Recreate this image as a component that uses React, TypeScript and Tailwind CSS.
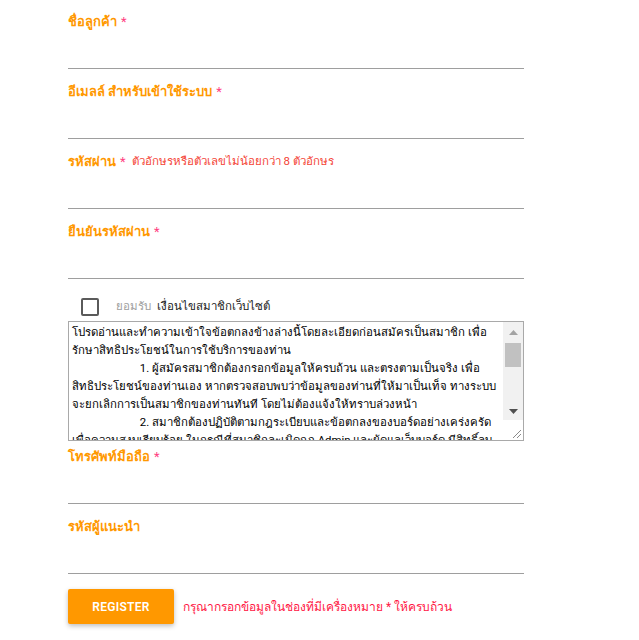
import { useState } from "react";

const terms = `โปรดอ่านและทำความเข้าใจข้อตกลงข้างล่างนี้โดยละเอียดก่อนสมัครเป็นสมาชิก เพื่อรักษาสิทธิประโยชน์ในการใช้บริการของท่าน
                        1. ผู้สมัครสมาชิกต้องกรอกข้อมูลให้ครบถ้วน และตรงตามเป็นจริง เพื่อสิทธิประโยชน์ของท่านเอง หากตรวจสอบพบว่าข้อมูลของท่านที่ให้มาเป็นเท็จ ทางระบบจะยกเลิกการเป็นสมาชิกของท่านทันที โดยไม่ต้องแจ้งให้ทราบล่วงหน้า
                        2. สมาชิกต้องปฏิบัติตามกฎระเบียบและข้อตกลงของบอร์ดอย่างเคร่งครัด เพื่อความสงบเรียบร้อย ในกรณีที่สมาชิกละเมิดกฎ Admin และผู้ดูแลเว็บบอร์ด มีสิทธิ์ลบหรือระงับการใช้งานของสมาชิกได้ทันที
                        3. สมาชิกต้องรับผิดชอบต่อข้อความที่ตนเองโพสต์`;

function Field({
  label,
  hint,
  star = true,
  type = "text",
}: {
  label: string;
  hint?: string;
  star?: boolean;
  type?: string;
}) {
  return (
    <label className="block h-[70px]">
      <div className="flex h-[44px] items-center text-[13px] font-bold text-[#ff9800]">
        <span>{label}</span>
        {star ? <span className="ml-1 font-normal text-[#ff4081]">*</span> : null}
        {hint ? (
          <span className="ml-[6px] text-[11.5px] font-normal text-[#f44336]">{hint}</span>
        ) : null}
      </div>
      <input
        type={type}
        className="block h-[25px] w-full border-b border-[#9e9e9e] bg-transparent outline-none"
      />
    </label>
  );
}

// textarea with a drawn scrollbar, as the headless browser hides native ones
function TermsBox() {
  return (
    <div className="mt-[4px] flex h-[120px] w-[456px] border border-[#a9a9a9] bg-white">
      <textarea
        readOnly
        defaultValue={terms}
        className="h-full flex-1 resize-none overflow-y-auto px-[3px] py-[1px] text-[11.4px] leading-[18px] text-black outline-none [scrollbar-width:none]"
      />
      <div className="flex w-[20px] flex-col">
        <div className="flex flex-1 flex-col bg-[#f1f1f1]">
          <div className="flex h-[21px] items-center justify-center">
            <svg width="9" height="5" viewBox="0 0 9 5">
              <path d="M0 5 L4.5 0 L9 5 Z" fill="#a3a3a3" />
            </svg>
          </div>
          <div className="mx-[2px] h-[24px] bg-[#c1c1c1]" />
          <div className="flex-1" />
          <div className="flex h-[17px] items-center justify-center">
            <svg width="9" height="5" viewBox="0 0 9 5">
              <path d="M0 0 L9 0 L4.5 5 Z" fill="#505050" />
            </svg>
          </div>
        </div>
        <div className="flex h-[20px] items-end justify-end bg-white p-[2px]">
          <svg width="9" height="9" viewBox="0 0 9 9">
            <path d="M9 1 L1 9 M9 5 L5 9" stroke="#8a8a8a" strokeWidth="1" />
          </svg>
        </div>
      </div>
    </div>
  );
}

export default function App() {
  const [agree, setAgree] = useState(false);

  return (
    <div className="min-h-[640px] bg-white font-['Roboto','Noto_Sans',sans-serif] text-[13px] text-[#212121]">
      <form className="ml-[68px] w-[456px]" onSubmit={(e) => e.preventDefault()}>
        <Field label="ชื่อลูกค้า" />
        <Field label="อีเมลล์ สำหรับเข้าใช้ระบบ" />
        <Field label="รหัสผ่าน" hint="ตัวอักษรหรือตัวเลขไม่น้อยกว่า 8 ตัวอักษร" type="password" />
        <Field label="ยืนยันรหัสผ่าน" type="password" />

        <div className="mt-[17px] flex h-[20px] items-center">
          <button
            type="button"
            onClick={() => setAgree(!agree)}
            className="ml-[13px] h-[18px] w-[18px] rounded-[2px] border-2 border-[#5a5a5a]"
            aria-pressed={agree}
          />
          <span className="ml-[17px] text-[11.5px] text-[#9e9e9e]">ยอมรับ</span>
          <span className="ml-[6px] text-[11.5px] text-[#212121]">เงื่อนไขสมาชิกเว็บไซต์</span>
        </div>

        <TermsBox />

        <div className="mt-[-6px]">
          <Field label="โทรศัพท์มือถือ" />
          <Field label="รหัสผู้แนะนำ" star={false} />
        </div>

        <div className="mt-[14px] flex items-center">
          <button
            type="submit"
            className="h-[35px] w-[106px] rounded-[2px] bg-[#ff9800] text-[12px] font-semibold tracking-[0.3px] text-white shadow-[0_2px_5px_rgba(0,0,0,0.26)]"
          >
            REGISTER
          </button>
          <span className="ml-[9px] text-[12px] text-[#ff1744]">
            กรุณากรอกข้อมูลในช่องที่มีเครื่องหมาย * ให้ครบถ้วน
          </span>
        </div>
      </form>
    </div>
  );
}
